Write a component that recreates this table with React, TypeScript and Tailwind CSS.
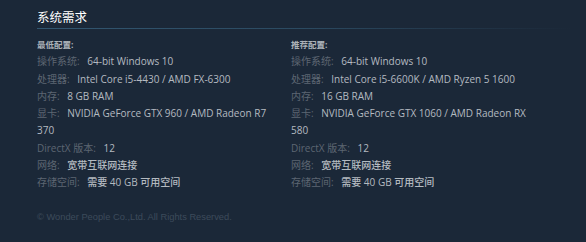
import React from 'react';

interface IReqRow {
  label: string;
  value: string;
}

const minimum: IReqRow[] = [
  { label: '操作系统:', value: '64-bit Windows 10' },
  { label: '处理器:', value: 'Intel Core i5-4430 / AMD FX-6300' },
  { label: '内存:', value: '8 GB RAM' },
  { label: '显卡:', value: 'NVIDIA GeForce GTX 960 / AMD Radeon R7 370' },
  { label: 'DirectX 版本:', value: '12' },
  { label: '网络:', value: '宽带互联网连接' },
  { label: '存储空间:', value: '需要 40 GB 可用空间' },
];

const recommended: IReqRow[] = [
  { label: '操作系统:', value: '64-bit Windows 10' },
  { label: '处理器:', value: 'Intel Core i5-6600K / AMD Ryzen 5 1600' },
  { label: '内存:', value: '16 GB RAM' },
  { label: '显卡:', value: 'NVIDIA GeForce GTX 1060 / AMD Radeon RX 580' },
  { label: 'DirectX 版本:', value: '12' },
  { label: '网络:', value: '宽带互联网连接' },
  { label: '存储空间:', value: '需要 40 GB 可用空间' },
];

function ReqColumn({ title, rows }: { title: string; rows: IReqRow[] }) {
  return (
    <div className="w-[240px]">
      <div className="text-[8.5px] font-bold text-[#acb2b8] leading-[17.3px]">{title}</div>
      <ul>
        {rows.map((row) => (
          <li key={row.label} className="text-[10px] leading-[17.3px] font-medium text-[#b4bac0]">
            <span className="text-[#5d6672] font-normal mr-[5px]">{row.label}</span> {row.value}
          </li>
        ))}
      </ul>
    </div>
  );
}

export default function App() {
  return (
    <div
      className="w-[586px] h-[242px] bg-[#1b2838] pl-[37px] pt-[8px]"
      style={{ fontFamily: '"Open Sans", "Noto Sans CJK SC", sans-serif' }}
    >
      {/* Section title */}
      <div className="text-[12.5px] leading-[20px] text-white">系统需求</div>
      <div className="h-px w-[535px] bg-gradient-to-r from-[#325670] via-[#2b4a61] to-[#1b2838]" />

      <div className="flex gap-[14px] mt-[7px]">
        <ReqColumn title="最低配置:" rows={minimum} />
        <ReqColumn title="推荐配置:" rows={recommended} />
      </div>

      <div
        className="mt-[18px] text-[9.3px] leading-[14px] text-[#3d4b5b]"
        style={{ fontFamily: '"Liberation Sans", Arial, sans-serif' }}
      >
        © Wonder People Co.,Ltd. All Rights Reserved.
      </div>
    </div>
  );
}
